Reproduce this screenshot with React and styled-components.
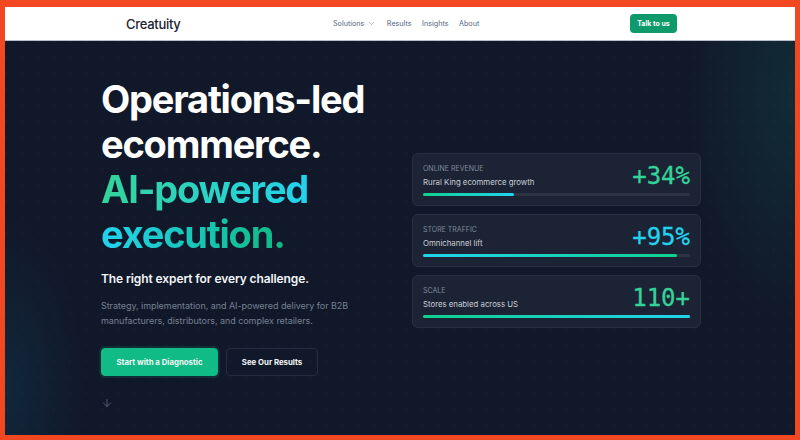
import React from 'react';
import styled, { createGlobalStyle } from 'styled-components';
import { ChevronDown, ArrowDown } from 'lucide-react';

const GlobalStyle = createGlobalStyle`
  html, body { margin: 0; padding: 0; }
  body { background: #f24822; font-family: Inter, "Noto Sans", sans-serif; }
  * { box-sizing: border-box; }
`;

const Frame = styled.div`
  width: 800px;
  height: 440px;
  padding: 7px 5px 5px 5px;
  overflow: hidden;
  background: #f24822;
`;

const Nav = styled.header`
  height: 34px;
  background: #fff;
  border-bottom: 1px solid #b9bfca;
  display: grid;
  grid-template-columns: 205px 1fr 47px 118px;
  align-items: center;
`;

const Logo = styled.div`
  padding-left: 121px;
  font-size: 13px;
  font-weight: 500;
  letter-spacing: -0.3px;
  color: #1b2233;
`;

const NavLinks = styled.nav`
  display: flex;
  align-items: center;
  gap: 10.5px;
  padding-left: 123px;
`;

const NavLink = styled.a`
  font-size: 7.2px;
  color: #56637c;
  display: flex;
  align-items: center;
  gap: 3px;
`;

const TalkButton = styled.button`
  width: 47px;
  height: 19px;
  padding: 0;
  border: 0;
  border-radius: 4px;
  background: #0f9a6c;
  color: #fff;
  font-family: inherit;
  font-size: 7px;
  font-weight: 700;
`;

const Hero = styled.main`
  height: 394px;
  padding: 36px 94px 0 96px;
  display: flex;
  justify-content: space-between;
  background-color: #111829;
  background-image:
    radial-gradient(circle at 0.5px 0.5px, rgba(255, 255, 255, 0.03) 1px, transparent 1.2px),
    radial-gradient(ellipse 80px 170px at 0% 88%, rgba(16, 74, 100, 0.3), transparent),
    radial-gradient(ellipse 110px 230px at 100% 14%, rgba(18, 84, 84, 0.32), transparent);
  background-size: 16px 16px, auto, auto;
`;

const Intro = styled.section`
  width: 290px;
`;

const Title = styled.h1`
  margin: 0;
  font-size: 38px;
  line-height: 45px;
  font-weight: 700;
  letter-spacing: -1.2px;
  color: #fff;
`;

const TitleLine = styled.span`
  display: block;
  width: fit-content;
  ${(p) => p.$gradient && `
    background: linear-gradient(90deg, ${p.$gradient});
    -webkit-background-clip: text;
    background-clip: text;
    color: transparent;
  `}
`;

const Tagline = styled.p`
  margin: 12px 0 0;
  font-size: 12px;
  line-height: 20px;
  font-weight: 600;
  letter-spacing: -0.1px;
  color: #f2f4f8;
`;

const Lead = styled.p`
  margin: 9px 0 0;
  font-size: 9px;
  line-height: 15px;
  letter-spacing: -0.05px;
  color: #758095;
`;

const Actions = styled.div`
  display: flex;
  gap: 8px;
  margin-top: 20px;
`;

const ActionButton = styled.button`
  height: 28px;
  width: ${(p) => p.$width}px;
  padding: 0;
  border-radius: 4px;
  font-family: inherit;
  font-size: 7.8px;
  font-weight: 700;
  color: #f3f6f8;
  background: ${(p) => (p.$primary ? '#10bb85' : 'transparent')};
  border: 1px solid ${(p) => (p.$primary ? '#10bb85' : '#242d40')};
  box-shadow: ${(p) => (p.$primary ? '0 0 0 2px rgba(16, 187, 133, 0.14)' : 'none')};
`;

const ScrollHint = styled.div`
  margin-top: 17px;
  height: 12px;
  color: #6a7488;
`;

const Stats = styled.section`
  width: 289px;
  margin-top: 76px;
  display: flex;
  flex-direction: column;
  gap: 8px;
`;

const StatCard = styled.article`
  height: 53px;
  padding: 7px 10px 0;
  border: 1px solid #283144;
  border-radius: 6px;
  background: #1b2334;
`;

const StatHead = styled.div`
  display: flex;
  justify-content: space-between;
  align-items: center;
  height: 30px;
`;

const StatLabel = styled.div`
  font-size: 7px;
  line-height: 12px;
  color: #808a9c;
`;

const StatText = styled.div`
  font-size: 7.8px;
  line-height: 14px;
  color: #c9ced7;
`;

const StatValue = styled.div`
  font-family: "DejaVu Sans Mono", monospace;
  font-size: 24px;
  line-height: 30px;
  -webkit-text-stroke: 0.3px ${(p) => p.$color};
  color: ${(p) => p.$color};
`;

const Track = styled.div`
  height: 3px;
  margin-top: 2px;
  border-radius: 2px;
  background: #2c3443;
`;

const Fill = styled.div`
  height: 100%;
  border-radius: 2px;
  background: linear-gradient(90deg, ${(p) => p.$gradient});
`;

const stats = [
  { label: 'ONLINE REVENUE', text: 'Rural King ecommerce growth', value: '+34%', color: '#34d399', pct: 34, gradient: '#10d08f, #22d3ee' },
  { label: 'STORE TRAFFIC', text: 'Omnichannel lift', value: '+95%', color: '#22d3ee', pct: 95, gradient: '#22d3ee, #10d08f' },
  { label: 'SCALE', text: 'Stores enabled across US', value: '110+', color: '#34d399', pct: 100, gradient: '#10d08f, #22d3ee' },
];

export default function App() {
  return (
    <Frame>
      <GlobalStyle />
      <Nav>
        <Logo>Creatuity</Logo>
        <NavLinks>
          <NavLink>Solutions <ChevronDown size={9} strokeWidth={1.2} /></NavLink>
          <NavLink>Results</NavLink>
          <NavLink>Insights</NavLink>
          <NavLink>About</NavLink>
        </NavLinks>
        <TalkButton>Talk to us</TalkButton>
      </Nav>
      <Hero>
        <Intro>
          <Title>
            <TitleLine>Operations-led</TitleLine>
            <TitleLine>ecommerce.</TitleLine>
            <TitleLine $gradient="#34d399, #22d3ee">AI-powered</TitleLine>
            <TitleLine $gradient="#22d3ee, #10b981">execution.</TitleLine>
          </Title>
          <Tagline>The right expert for every challenge.</Tagline>
          <Lead>
            Strategy, implementation, and AI-powered delivery for B2B<br />
            manufacturers, distributors, and complex retailers.
          </Lead>
          <Actions>
            <ActionButton $primary $width={117}>Start with a Diagnostic</ActionButton>
            <ActionButton $width={92}>See Our Results</ActionButton>
          </Actions>
          <ScrollHint><ArrowDown size={12} strokeWidth={1.5} /></ScrollHint>
        </Intro>
        <Stats>
          {stats.map((s) => (
            <StatCard key={s.label}>
              <StatHead>
                <div>
                  <StatLabel>{s.label}</StatLabel>
                  <StatText>{s.text}</StatText>
                </div>
                <StatValue $color={s.color}>{s.value}</StatValue>
              </StatHead>
              <Track>
                <Fill $gradient={s.gradient} style={{ width: `${s.pct}%` }} />
              </Track>
            </StatCard>
          ))}
        </Stats>
      </Hero>
    </Frame>
  );
}
